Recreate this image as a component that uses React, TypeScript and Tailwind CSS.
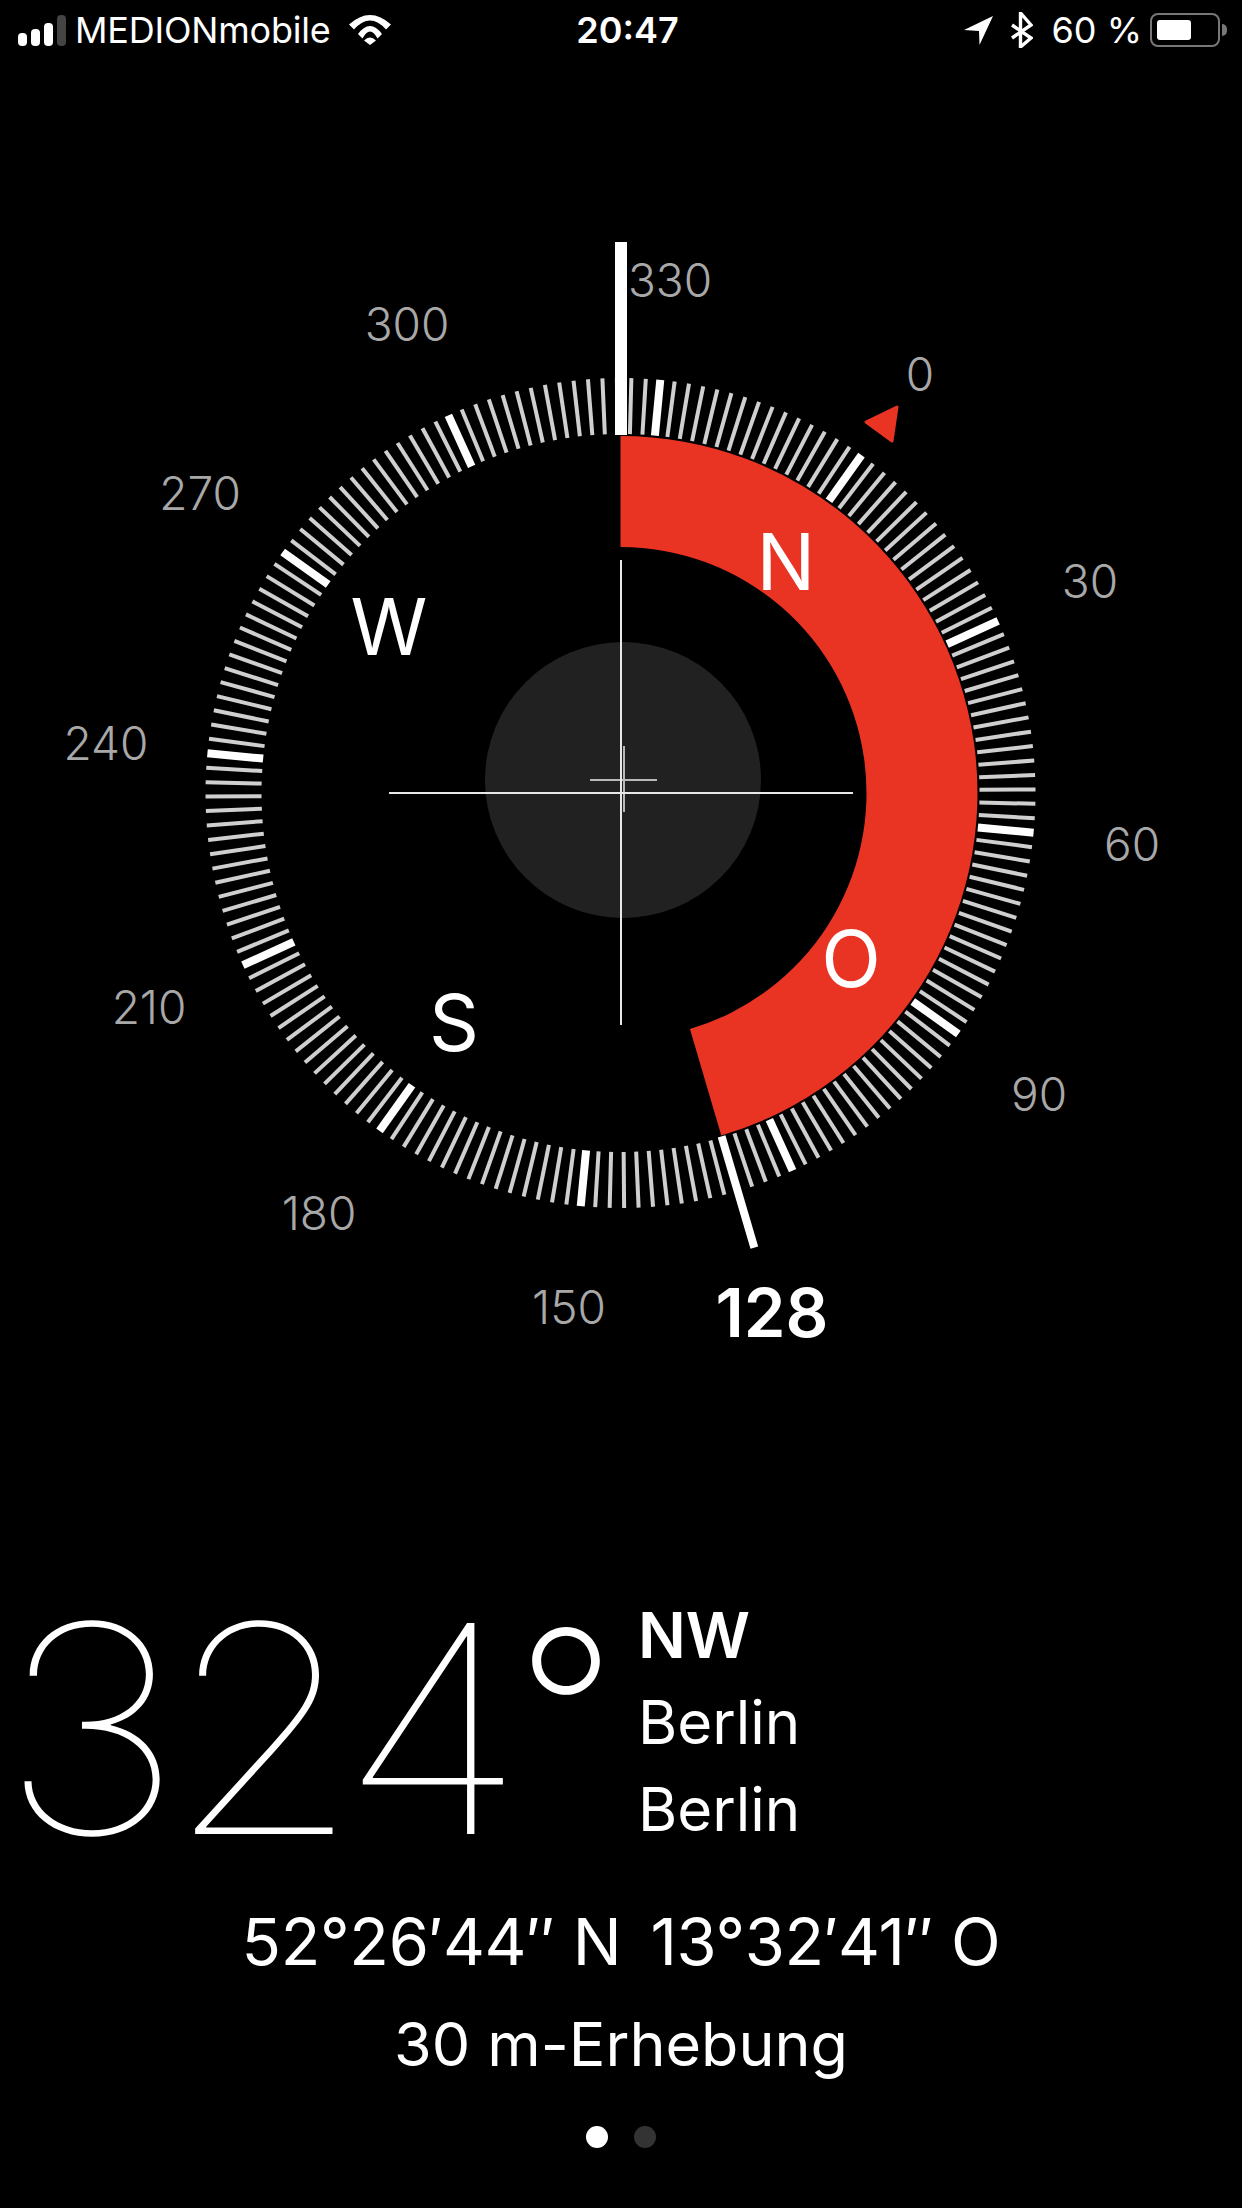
import React, { FC } from 'react';

const CX = 620.5;
const CY = 793;
const HEADING = 324.5;
const RED_END = 163.6;

const polar = (r: number, deg: number) => {
  const a = (deg * Math.PI) / 180;
  return { x: CX + r * Math.sin(a), y: CY - r * Math.cos(a) };
};

const arcPath = () => {
  const a = polar(357, 0);
  const b = polar(357, RED_END);
  const c = polar(246, RED_END);
  const d = polar(246, 0);
  return `M${a.x} ${a.y} A357 357 0 0 1 ${b.x} ${b.y} L${c.x} ${c.y} A246 246 0 0 0 ${d.x} ${d.y} Z`;
};

const DEGREES = [
  { t: '330', x: 670, y: 280 },
  { t: '0', x: 920, y: 374 },
  { t: '30', x: 1090, y: 581 },
  { t: '60', x: 1132, y: 844 },
  { t: '90', x: 1039, y: 1094 },
  { t: '150', x: 569, y: 1307 },
  { t: '180', x: 319, y: 1213 },
  { t: '210', x: 149, y: 1007 },
  { t: '240', x: 106, y: 743 },
  { t: '270', x: 200, y: 493 },
  { t: '300', x: 407, y: 324 },
];

const POINTS = [
  { t: 'N', x: 786, y: 562 },
  { t: 'O', x: 851, y: 959 },
  { t: 'S', x: 454, y: 1023 },
  { t: 'W', x: 389, y: 627 },
];

const Compass: FC = () => {
  const ticks = Array.from({ length: 180 }, (_, i) => i * 2);
  const mark = { a: polar(358, RED_END), b: polar(474, RED_END) };
  return (
    <svg viewBox="0 60 1242 1340" className="block w-[1242px] h-[1340px]">
      {ticks.map((deg) => {
        const thick = deg % 30 === 0;
        const a = polar(359, deg - HEADING);
        const b = polar(415, deg - HEADING);
        return (
          <line
            key={deg}
            x1={a.x}
            y1={a.y}
            x2={b.x}
            y2={b.y}
            stroke={thick ? '#ffffff' : '#cfcfcf'}
            strokeWidth={thick ? 8 : 4}
          />
        );
      })}
      <path d={arcPath()} fill="#ea3423" />
      <rect x="615" y="242" width="12" height="193" fill="#ffffff" />
      <line x1={mark.a.x} y1={mark.a.y} x2={mark.b.x} y2={mark.b.y} stroke="#ffffff" strokeWidth="8" />
      <polygon points="897,407 866,422 892,441" fill="#ea3423" stroke="#ea3423" strokeWidth="3" strokeLinejoin="round" />

      <circle cx="623" cy="780" r="138" fill="#212121" />
      <rect x="590" y="779" width="67" height="2" fill="#b8b8b8" />
      <rect x="623" y="746" width="2" height="66" fill="#b8b8b8" />
      <rect x="620" y="560" width="2" height="465" fill="#e8e8e8" />
      <rect x="389" y="792" width="464" height="2" fill="#e8e8e8" />

      {DEGREES.map((d) => (
        <text key={d.t} x={d.x} y={d.y + 17} textAnchor="middle" fontSize="46" fontWeight="300" fill="#a8a8a8">
          {d.t}
        </text>
      ))}
      <text x="772" y="1337" textAnchor="middle" fontSize="67" fontWeight="600" fill="#ffffff">
        128
      </text>
      {POINTS.map((p) => (
        <text key={p.t} x={p.x} y={p.y + 28} textAnchor="middle" fontSize="78" fill="#ffffff">
          {p.t}
        </text>
      ))}
    </svg>
  );
};

const StatusBar: FC = () => (
  <div className="grid grid-cols-[1fr_auto_1fr] items-center h-[60px] pl-[18px] pr-[15px] text-white text-[36px] leading-none">
    <div className="flex items-center">
      <svg width="48" height="31" viewBox="0 0 48 31" className="mr-[9px] mt-[1px]">
        <rect x="0" y="18" width="9" height="13" rx="4" fill="#fff" />
        <rect x="13" y="14" width="9" height="17" rx="4" fill="#fff" />
        <rect x="26" y="8" width="9" height="23" rx="4" fill="#fff" />
        <rect x="39" y="0" width="9" height="31" rx="4" fill="#444" />
      </svg>
      <span className="tracking-[-0.2px]">MEDIONmobile</span>
      <svg width="42" height="30" viewBox="0 0 42 30" className="ml-[18px]">
        <path d="M0 9.5 Q21 -9.5 42 9.5 L37 14.5 Q21 -3.5 5 14.5 Z" fill="#fff" />
        <path d="M9 19 Q21 3 33 19 L28.5 23.5 Q21 9.5 13.5 23.5 Z" fill="#fff" />
        <path d="M15 25.5 Q21 19.5 27 25.5 L21 30 Z" fill="#fff" />
      </svg>
    </div>
    <span className="ml-[10px] font-semibold">20:47</span>
    <div className="flex items-center justify-end">
      <svg width="30" height="29" viewBox="0 0 30 29" className="mr-[17px]">
        <polygon points="29,0 0,14 15,15 15.5,29" fill="#fff" />
      </svg>
      <svg width="22" height="36" viewBox="0 0 22 36" className="mr-[18px]">
        <path d="M1 13 L20 26 L9.5 35 V1 L20 13 L1 26" fill="none" stroke="#fff" strokeWidth="3.4" />
      </svg>
      <span>60 %</span>
      <div className="flex items-center ml-[8px]">
        <div className="w-[70px] h-[34px] rounded-[8px] border-2 border-[#777777] p-[5px]">
          <div className="w-[34px] h-full rounded-[3px] bg-white" />
        </div>
        <div className="w-[5px] h-[12px] ml-[2px] rounded-r-full bg-[#777777]" />
      </div>
    </div>
  </div>
);

const Reading: FC = () => (
  <div className="flex items-start pt-[184px] text-white">
    <div className="w-[516px] text-[290px] leading-[290px] font-thin tracking-[-15px] origin-left scale-x-[1.08]">324</div>
    <div className="w-[122px] mt-[15px] text-[220px] leading-[220px] font-extralight">°</div>
    <div className="mt-[8px] text-[60px] leading-[87px]">
      <div className="text-[63px] font-semibold">NW</div>
      <div>Berlin</div>
      <div>Berlin</div>
    </div>
  </div>
);

const App: FC = () => {
  return (
    <div className="w-[1242px] h-[2208px] bg-black overflow-hidden font-['Inter','Liberation_Sans',sans-serif]">
      <StatusBar />
      <Compass />
      <Reading />
      <div className="flex flex-col items-center text-white font-normal">
        <div className="flex gap-[29px] mt-[16px] leading-[103px] text-[65px] tracking-[-0.3px]">
          <span>52°26′44″ N</span>
          <span>13°32′41″ O</span>
        </div>
        <div className="leading-[103px] text-[61px]">30 m-Erhebung</div>
      </div>
      <div className="flex justify-center gap-[26px] mt-[30px]">
        <div className="w-[22px] h-[22px] rounded-full bg-white" />
        <div className="w-[22px] h-[22px] rounded-full bg-[#333333]" />
      </div>
    </div>
  );
};

export default App;
